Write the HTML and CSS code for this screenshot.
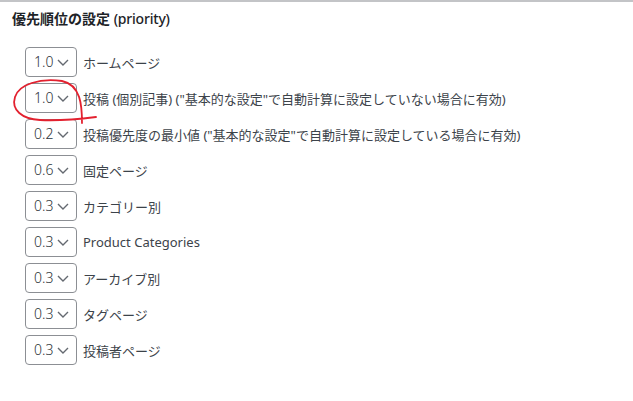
FILE: index.html
```html
<!DOCTYPE html>
<html lang="ja">
<head>
    <meta charset="UTF-8">
    <title>優先順位の設定</title>
    <link rel="stylesheet" href="styles.css">
</head>
<body>
<div class="panel">
    <h3 class="title">優先順位の設定 <span class="sub">(priority)</span></h3>
    <ul class="rows">
        <li><span class="sel">1.0</span>ホームページ</li>
        <li><span class="sel">1.0</span>投稿 (個別記事) ("基本的な設定"で自動計算に設定していない場合に有効)</li>
        <li><span class="sel">0.2</span>投稿優先度の最小値 ("基本的な設定"で自動計算に設定している場合に有効)</li>
        <li><span class="sel">0.6</span>固定ページ</li>
        <li><span class="sel">0.3</span>カテゴリー別</li>
        <li><span class="sel">0.3</span>Product Categories</li>
        <li><span class="sel">0.3</span>アーカイブ別</li>
        <li><span class="sel">0.3</span>タグページ</li>
        <li><span class="sel">0.3</span>投稿者ページ</li>
    </ul>
    <!-- 手書きの赤丸 -->
    <svg class="mark" width="633" height="401" viewBox="0 0 633 401">
        <path d="M82,123 C82,106 81,85 62,81 C40,78 19,84 15,97 C11,110 22,119 40,120 C60,121 80,119 96,117"
              fill="none" stroke="#e3212f" stroke-width="1.8" stroke-linecap="round"/>
    </svg>
</div>
</body>
</html>
```

FILE: styles.css
```css
*{
    margin: 0;
    padding: 0;
}
html,body{
    width: 100%;
    height: 100%;
    background: #fff;
}
body{
    font-family: "Noto Sans", "Noto Sans CJK JP", sans-serif;
    color: #3c434a;
    font-size: 13px;
}
.panel{
    position: relative;
    border-top: 2px solid #c3c4c7;
    height: 100%;
    box-sizing: border-box;
}
.title{
    font-size: 14px;
    font-weight: 600;
    color: #1d2327;
    line-height: 20px;
    padding: 7px 12px 0;
}
.title .sub{
    font-weight: 500;
    letter-spacing: -0.2px;
}
.rows{
    list-style: none;
    padding: 18px 0 0 25px;
}
.rows>li{
    display: flex;
    align-items: center;
    gap: 6px;
    height: 30px;
    margin-bottom: 6px;
    white-space: nowrap;
}
.sel{
    box-sizing: border-box;
    width: 52px;
    height: 30px;
    border: 1px solid #8c8f94;
    border-radius: 4px;
    font-size: 14px;
    font-weight: 300;
    line-height: 28px;
    padding-left: 8px;
    color: #2c3338;
    background: #fff url("data:image/svg+xml,%3Csvg xmlns='http://www.w3.org/2000/svg' width='20' height='20' viewBox='0 0 20 20'%3E%3Cpath d='M5 8l5 5 5-5' fill='none' stroke='%23646970' stroke-width='1.4'/%3E%3C/svg%3E") no-repeat right 3px top 50%;
    background-size: 20px 20px;
}
.mark{
    position: absolute;
    left: 0;
    top: -2px;
    pointer-events: none;
}
```
